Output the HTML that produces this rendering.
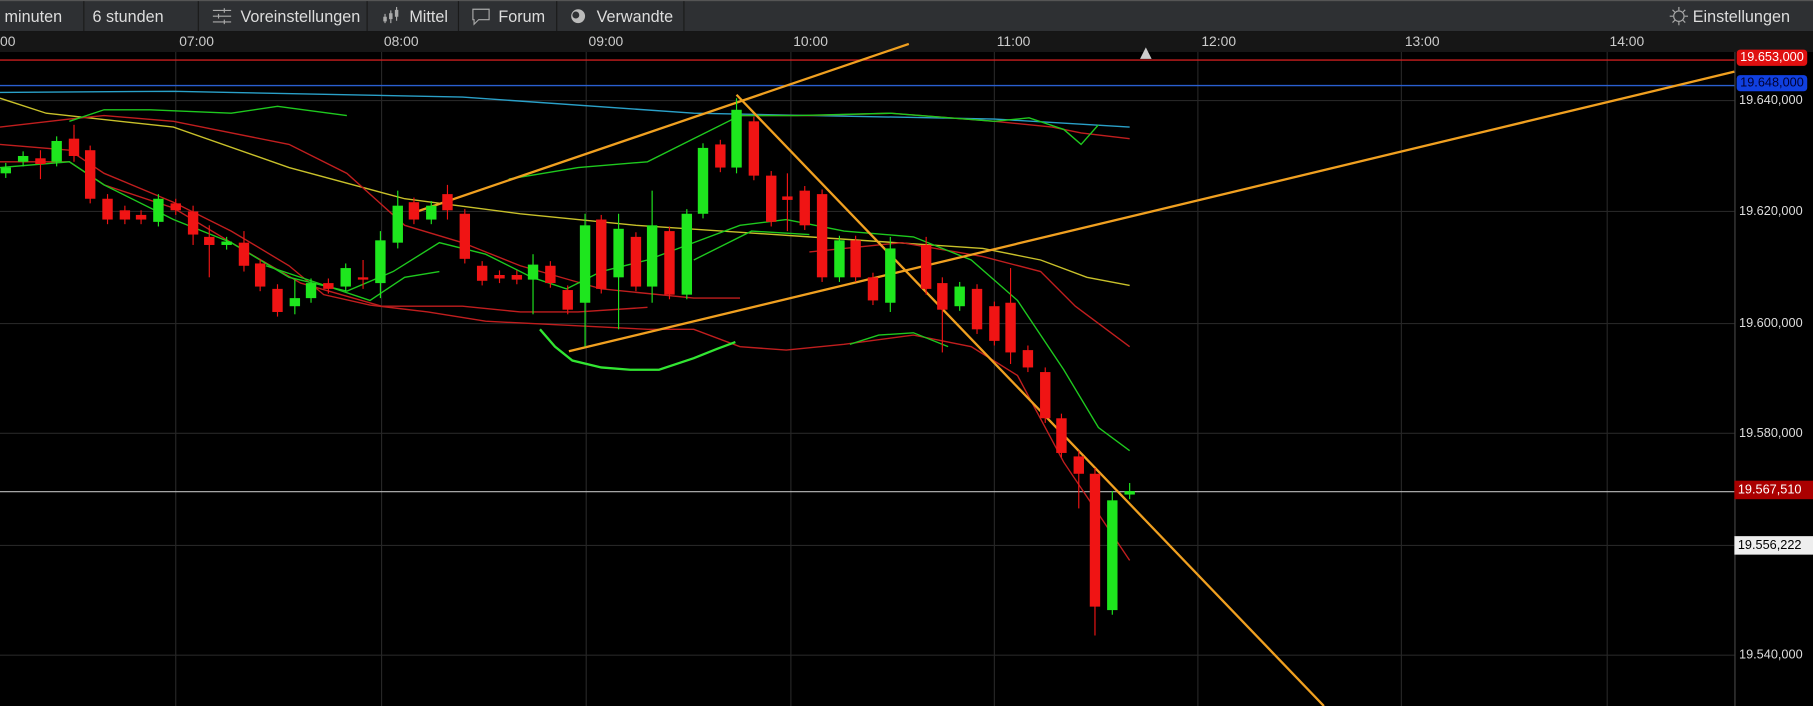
<!DOCTYPE html>
<html><head><meta charset="utf-8"><style>
html,body{margin:0;padding:0;background:#000;overflow:hidden;width:1813px;height:706px}
#w{position:absolute;left:0;top:0;width:1568px;height:611px;transform:scale(1.15625,1.1555);transform-origin:0 0;font-family:"Liberation Sans",sans-serif;background:#000}
.tb{position:absolute;left:0;top:0;width:1568px;height:26px;background:#2e3033;border-top:1px solid #555;color:#ddd;font-size:14px}
.tb div{position:absolute;top:0;height:26px;line-height:26px;border-right:1px solid #1a1a1a}
.ax{position:absolute;left:0;top:27px;width:1568px;height:18px;background:#161616;color:#ccc;font-size:12px}
.ax span{position:absolute;top:0;line-height:18px}
.pl{position:absolute;font-size:11px;color:#ddd;left:1504px}
</style></head><body><div id="w">
<div class="tb">
<div style="left:0;width:72px">&nbsp;minuten</div>
<div style="left:72px;width:100px;padding-left:8px;box-sizing:border-box">6 stunden</div>
<div style="left:172px;width:146px;padding-left:36px;box-sizing:border-box">Voreinstellungen<svg style="position:absolute;left:12px;top:6px" width="16" height="14" stroke="#aaa" fill="none"><path d="M0 2h16M0 7h16M0 12h16M10 0v4M5 5v4M10 10v4"/></svg></div>
<div style="left:318px;width:79px;padding-left:36px;box-sizing:border-box">Mittel<svg style="position:absolute;left:12px;top:5px" width="18" height="16" stroke="#aaa" fill="none"><path d="M3 6v8M8 3v11M13 0v12M2 9h2v3H2zM7 6h2v4H7zM12 3h2v5h-2z"/></svg></div>
<div style="left:397px;width:85px;padding-left:34px;box-sizing:border-box">Forum<svg style="position:absolute;left:11px;top:6px" width="16" height="16" stroke="#aaa" fill="none"><path d="M1 1h14v9H6l-4 4v-4H1z"/></svg></div>
<div style="left:482px;width:110px;padding-left:34px;box-sizing:border-box">Verwandte<svg style="position:absolute;left:11px;top:6px" width="14" height="14"><circle cx="7" cy="7" r="6" fill="#bbb"/><circle cx="5" cy="6" r="3" fill="#2e3033"/></svg></div>
<div style="left:1440px;width:128px;border:none;padding-left:24px;box-sizing:border-box">Einstellungen<svg style="position:absolute;left:4px;top:5px" width="16" height="16" stroke="#aaa" fill="none"><circle cx="8" cy="8" r="4.5"/><path d="M8 0v3M8 13v3M0 8h3M13 8h3M2.5 2.5l2 2M11.5 11.5l2 2M13.5 2.5l-2 2M2.5 13.5l2-2"/></svg></div>
</div>
<div class="ax"><span style="left:0">00</span><span style="left:155px">07:00</span><span style="left:332px">08:00</span><span style="left:509px">09:00</span><span style="left:686px">10:00</span><span style="left:862px">11:00</span><span style="left:1039px">12:00</span><span style="left:1215px">13:00</span><span style="left:1392px">14:00</span></div>
<svg style="position:absolute;left:0;top:0" width="1568" height="611">
<g stroke="#262626" stroke-width="1">
<path d="M152 45V611M330 45V611M507 45V611M684 45V611M860 45V611M1036 45V611M1212 45V611M1390 45V611"/>
<path d="M0 87H1500M0 183H1500M0 280H1500M0 375H1500M0 472H1500M0 567H1500"/>
</g>
<path d="M1500.5 45V611" stroke="#444"/>
<path d="M0 52H1500" stroke="#c81e1e" stroke-width="1.2"/>
<path d="M0 74H1500" stroke="#2a5fd0" stroke-width="1.2"/>
<path d="M0 425.5H1500" stroke="#bbb" stroke-width="1"/>
<path d="M986 51l5-10 5 10z" fill="#ccc"/>
<g fill="none" stroke-width="1.2">
<path stroke="#2aa0c8" d="M0 80L150 79 400 84 600 98 860 103 977 110"/>
<path stroke="#c8c02a" d="M0 85L40 98 150 110 250 145 350 172 450 185 550 195 700 205 850 215 900 225 940 240 977 247"/>
<path stroke="#c01e1e" d="M0 110L60 103 90 100 150 105 250 125 300 150 350 195 400 210 450 230 520 250 600 258 640 258"/>
<path stroke="#c01e1e" d="M0 125L60 130 90 150 150 175 200 200 250 230 280 255 320 264 370 270 420 278 500 282 560 285 600 285 640 300 680 303 730 298 790 290 840 300 880 325 920 400 977 485"/>
<path stroke="#c01e1e" d="M0 140L60 140 90 160 150 180 200 210 260 245 330 265 400 265 450 270 500 270 560 266"/>
<path stroke="#c01e1e" d="M700 218L780 210 850 222 900 235 930 265 977 300"/>
<path stroke="#c01e1e" d="M640 100L700 100 770 98 860 105 910 110 935 115 977 120"/>
<path stroke="#1ec81e" d="M0 145L60 140 90 160 150 190 200 210 250 240 300 252 340 235 380 210 420 220 460 240 490 250 520 235 560 225 600 210 640 195 680 190 730 200 790 205 840 225 880 260 920 320 950 370 977 390"/>
<path stroke="#1ec81e" d="M60 105L90 95 130 95 200 98 240 92 300 100"/>
<path stroke="#1ec81e" d="M230 230L290 250 320 260 350 240 380 235"/>
<path stroke="#1ec81e" d="M440 155L500 145 560 140 600 120 640 100 690 100 770 98 860 105 890 102 920 112 935 125 950 108"/>
<path stroke="#1ec81e" d="M600 225L650 200 700 203"/>
<path stroke="#1ec81e" d="M735 298L760 290 790 288 820 300" />
<path stroke="#32e632" stroke-width="2" d="M467 285L480 300 495 312 520 318 545 320 570 320 600 310 620 302 636 296"/>
</g>
<g stroke="#f0a020" stroke-width="2" fill="none">
<path d="M355 185L786 38"/>
<path d="M492 304L1500 62"/>
<path d="M637 82L1145 611"/>
</g>
<g id="c"></g>
</svg>
<div class="pl" style="top:43px;background:#e01010;color:#fff;border-radius:3px;padding:1px 3px;left:1502px">19.653,000</div>
<div class="pl" style="top:65px;background:#1040e0;color:#003;border-radius:3px;padding:1px 3px;left:1502px">19.648,000</div>
<div class="pl" style="top:81px">19.640,000</div>
<div class="pl" style="top:177px">19.620,000</div>
<div class="pl" style="top:274px">19.600,000</div>
<div class="pl" style="top:369px">19.580,000</div>
<div class="pl" style="top:416px;background:#a00;color:#fff;left:1500px;padding:2px 3px;width:62px">19.567,510</div>
<div class="pl" style="top:464px;background:#eee;color:#000;left:1500px;padding:2px 3px;width:62px">19.556,222</div>
<div class="pl" style="top:561px">19.540,000</div>
</div>
<script>
var d=[[5,150,145],[20,140,135],[35,137,142,130,155],[49,140,122],[64,120,135,108,140],[78,130,172],[93,172,190],[108,182,190],[122,186,190],[137,192,172],[152,176,182],[167,183,203,178,212],[181,205,212,195,240],[196,212,209],[211,210,230,200,235],[225,228,248],[240,250,270],[255,265,258,242,272],[269,258,245],[284,245,250],[299,248,232],[314,240,241,225,250],[329,245,208,200,258],[344,210,178,165,215],[358,175,190],[373,190,178],[387,168,182,160,190],[402,185,224],[417,230,243],[432,238,241],[447,238,242],[461,242,229,220,272],[476,230,245],[491,251,268],[506,262,195,185,300],[520,190,250],[535,240,198,185,285],[550,205,248],[564,248,195,165,262],[579,200,255],[594,255,185],[608,185,128],[623,125,145],[637,145,95,85,150],[652,105,152],[667,152,192],[681,170,173,150,200],[696,165,195],[711,168,240],[726,240,208],[740,208,240],[755,240,260],[770,262,215,205,270],[801,212,250,205,255],[815,245,268,240,305],[830,265,248],[845,250,285],[860,265,295],[874,262,305,232,315],[889,303,318],[904,322,362],[918,362,392],[933,395,410,390,440],[947,410,525,405,550],[962,528,433,425,532],[977,428,425,418,432]];
var g=document.getElementById('c'),s='';
d.forEach(function(c){var x=c[0],o=c[1],cl=c[2],up=cl<o,col=up?'#1ee61e':'#f01414',t=Math.min(o,cl),b=Math.max(o,cl),h=c[3]||t-4,l=c[4]||b+4;
s+='<line x1="'+x+'" x2="'+x+'" y1="'+h+'" y2="'+l+'" stroke="'+col+'"/><rect x="'+(x-4.5)+'" y="'+t+'" width="9" height="'+Math.max(2,b-t)+'" fill="'+col+'"/>';});
g.innerHTML=s;
</script>
</body></html>
